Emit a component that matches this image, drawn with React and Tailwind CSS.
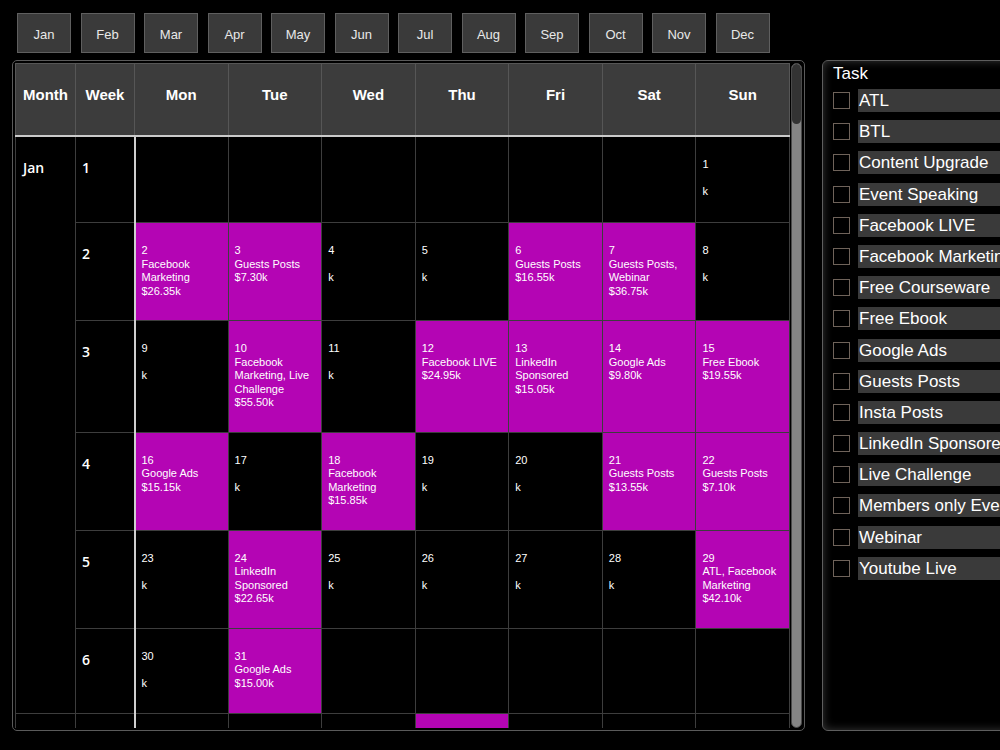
import React from "react";

const MONTHS = ["Jan", "Feb", "Mar", "Apr", "May", "Jun", "Jul", "Aug", "Sep", "Oct", "Nov", "Dec"];
const DAYS = ["Mon", "Tue", "Wed", "Thu", "Fri", "Sat", "Sun"];

const TASKS = [
  "ATL",
  "BTL",
  "Content Upgrade",
  "Event Speaking",
  "Facebook LIVE",
  "Facebook Marketing",
  "Free Courseware",
  "Free Ebook",
  "Google Ads",
  "Guests Posts",
  "Insta Posts",
  "LinkedIn Sponsored",
  "Live Challenge",
  "Members only Events",
  "Webinar",
  "Youtube Live",
];

// each week: 7 slots Mon..Sun, null = outside the month
const d = (day, task = "", amount = "") => ({ day, task, amount });

const JAN = [
  [null, null, null, null, null, null, d(1)],
  [
    d(2, "Facebook Marketing", "26.35"),
    d(3, "Guests Posts", "7.30"),
    d(4),
    d(5),
    d(6, "Guests Posts", "16.55"),
    d(7, "Guests Posts, Webinar", "36.75"),
    d(8),
  ],
  [
    d(9),
    d(10, "Facebook Marketing, Live Challenge", "55.50"),
    d(11),
    d(12, "Facebook LIVE", "24.95"),
    d(13, "LinkedIn Sponsored", "15.05"),
    d(14, "Google Ads", "9.80"),
    d(15, "Free Ebook", "19.55"),
  ],
  [
    d(16, "Google Ads", "15.15"),
    d(17),
    d(18, "Facebook Marketing", "15.85"),
    d(19),
    d(20),
    d(21, "Guests Posts", "13.55"),
    d(22, "Guests Posts", "7.10"),
  ],
  [
    d(23),
    d(24, "LinkedIn Sponsored", "22.65"),
    d(25),
    d(26),
    d(27),
    d(28),
    d(29, "ATL, Facebook Marketing", "42.10"),
  ],
  [d(30), d(31, "Google Ads", "15.00"), null, null, null, null, null],
];

const FEB = [[null, null, d(1), d(2, "Webinar", "12.40"), d(3), d(4), d(5)]];

const CALENDAR = [
  { month: "Jan", weeks: JAN },
  { month: "Feb", weeks: FEB },
];

function DayCell({ item }) {
  const filled = item && item.task;
  return (
    <td
      className={`border border-[#3d3d3d] align-top pl-[6px] pr-[4px] pt-[21px] pb-[22px] text-[11px] leading-[13.5px] text-white ${
        filled ? "bg-[#b405b4]" : "bg-black"
      }`}
    >
      {item && (
        <>
          <div>{item.day}</div>
          <div>{item.task || "\u00a0"}</div>
          <div>{item.amount ? `$${item.amount}k` : "k"}</div>
        </>
      )}
    </td>
  );
}

function Calendar() {
  return (
    <table className="w-[775px] table-fixed border-collapse border-l border-r border-l-[#bdbdbd] border-r-[#9a9a9a]">
      <colgroup>
        <col className="w-[60px]" />
        <col className="w-[59px]" />
        {DAYS.map((day) => (
          <col key={day} />
        ))}
      </colgroup>
      <thead>
        <tr className="h-[72px] bg-[#3c3c3c]">
          {["Month", "Week", ...DAYS].map((h) => (
            <th
              key={h}
              className="border border-[#565656] border-b-2 border-b-[#cacaca] pb-[8px] text-center align-middle text-[15px] font-bold text-white"
            >
              {h}
            </th>
          ))}
        </tr>
      </thead>
      <tbody>
        {CALENDAR.map(({ month, weeks }, mi) =>
          weeks.map((week, wi) => (
            <tr key={`${month}-${wi}`} className={mi === 0 && wi === 0 ? "h-[87px]" : "h-[85px]"}>
              {wi === 0 && (
                <td
                  rowSpan={weeks.length}
                  className="border border-[#3d3d3d] bg-black align-top pl-[7px] pt-[20px] font-['Open_Sans',sans-serif] text-[14px] font-semibold text-white"
                >
                  {month}
                </td>
              )}
              <td className="border border-[#3d3d3d] border-r-2 border-r-[#cfcfcf] bg-black align-top pl-[6px] pt-[20px] font-['Open_Sans',sans-serif] text-[14px] font-semibold text-white">
                {month === "Jan" ? wi + 1 : wi + 6}
              </td>
              {week.map((item, i) => (
                <DayCell key={i} item={item} />
              ))}
            </tr>
          ))
        )}
      </tbody>
    </table>
  );
}

function TaskPanel() {
  return (
    <div className="w-[210px] h-[671px] shrink-0 rounded-[6px] border border-[#5e5e5e] shadow-[inset_0_0_10px_rgba(255,255,255,0.22)] pl-[10px] pt-[2px]">
      <div className="text-[17px] leading-[22px] text-white">Task</div>
      <div className="mt-[4px] flex flex-col gap-[8.2px]">
        {TASKS.map((t) => (
          <label key={t} className="flex items-center gap-[8px]">
            <span className="w-[17px] h-[17px] shrink-0 border border-[#6f635a] bg-black" />
            <span className="flex-1 h-[23px] bg-[#3a3a3a] pl-[1px] text-[17px] leading-[23px] text-white whitespace-nowrap overflow-hidden">
              {t}
            </span>
          </label>
        ))}
      </div>
    </div>
  );
}

export default function App() {
  return (
    <div className="w-[1000px] h-[750px] overflow-hidden bg-black font-['Liberation_Sans',Arial,sans-serif]">
      <div className="flex gap-[9.5px] pl-[17px] pt-[13px]">
        {MONTHS.map((m) => (
          <button
            key={m}
            className="w-[54px] h-[40px] border border-[#5f5f5f] bg-[#3a3a3a] pt-[4px] text-[13px] text-[#e8e8e8]"
          >
            {m}
          </button>
        ))}
      </div>

      <div className="mt-[7px] flex gap-[17px] pl-[12px]">
        <div className="w-[793px] h-[671px] shrink-0 rounded-[5px] border border-[#5a5a5a] p-[2px] flex gap-[1px]">
          <div className="w-[775px] h-full overflow-hidden">
            <Calendar />
          </div>
          {/* scrollbar */}
          <div className="w-[11px] h-full rounded-full bg-[#858585] overflow-hidden border border-[#4a4a4a]">
            <div className="h-[60px] rounded-full bg-[#333333]" />
          </div>
        </div>
        <TaskPanel />
      </div>
    </div>
  );
}
